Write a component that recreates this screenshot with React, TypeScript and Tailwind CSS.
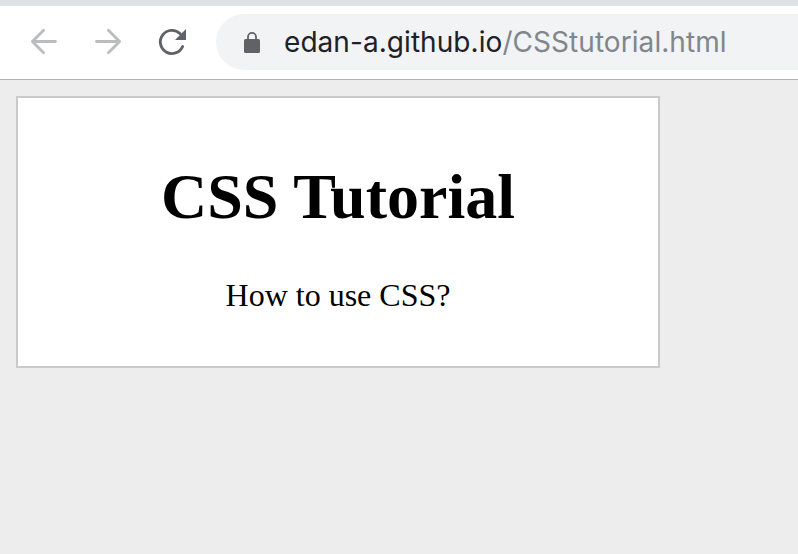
function BackIcon() {
  return (
    <svg className="h-8 w-8 shrink-0" viewBox="0 0 32 32" fill="none" stroke="#babcbe" strokeWidth="2.8" strokeLinecap="round" strokeLinejoin="round">
      <path d="M27.5 15.5H4.4M15.6 4.3L4.4 15.5l11.2 11.2" />
    </svg>
  );
}

function ForwardIcon() {
  return (
    <svg className="h-8 w-8 shrink-0" viewBox="0 0 32 32" fill="none" stroke="#babcbe" strokeWidth="2.8" strokeLinecap="round" strokeLinejoin="round">
      <path d="M4.5 15.5H27.6M16.4 4.3L27.6 15.5L16.4 26.7" />
    </svg>
  );
}

function ReloadIcon() {
  return (
    <svg className="h-8 w-8 shrink-0" viewBox="0 0 32 32" fill="none">
      <path d="M26.6 20.5A11.6 11.6 0 1 1 24.2 7.8" stroke="#5f6368" strokeWidth="2.9" strokeLinecap="round" />
      <path d="M30 3v11H19z" fill="#5f6368" />
    </svg>
  );
}

function LockIcon() {
  return (
    <svg className="h-[22px] w-4 shrink-0" viewBox="0 0 16 22" fill="none">
      <path d="M4 9V5.9a4 4 0 0 1 8 0V9" stroke="#5f6368" strokeWidth="1.8" />
      <rect y="8" width="16" height="14" rx="1.6" fill="#5f6368" />
    </svg>
  );
}

export default function App() {
  return (
    <div className="flex h-[554px] w-[798px] flex-col overflow-hidden bg-[#ededed]">
      <header className="flex h-20 shrink-0 items-start border-t-6 border-b border-t-[#dee1e6] border-b-[#b4b4b4] bg-white">
        <nav className="flex gap-8 pt-5 pl-7">
          <BackIcon />
          <ForwardIcon />
          <ReloadIcon />
        </nav>
        <div className="mt-2 ml-7 flex h-14 flex-1 items-center rounded-l-full bg-[#f1f3f4] pl-7">
          <LockIcon />
          <span className="ml-6 font-['Inter',sans-serif] text-[28px] leading-8 tracking-[0.06px] whitespace-nowrap text-[#202124]">
            edan-a.github.io<span className="text-[#80868b]">/CSStutorial.html</span>
          </span>
        </div>
      </header>
      <main className="p-4 font-['Liberation_Serif',serif] text-black">
        <section className="h-[272px] w-[644px] border-2 border-[#cacaca] bg-white pt-[62px] text-center">
          <h1 className="text-[64px] leading-[74px] font-bold">CSS Tutorial</h1>
          <p className="mt-[43px] text-[32px] leading-9">How to use CSS?</p>
        </section>
      </main>
    </div>
  );
}
